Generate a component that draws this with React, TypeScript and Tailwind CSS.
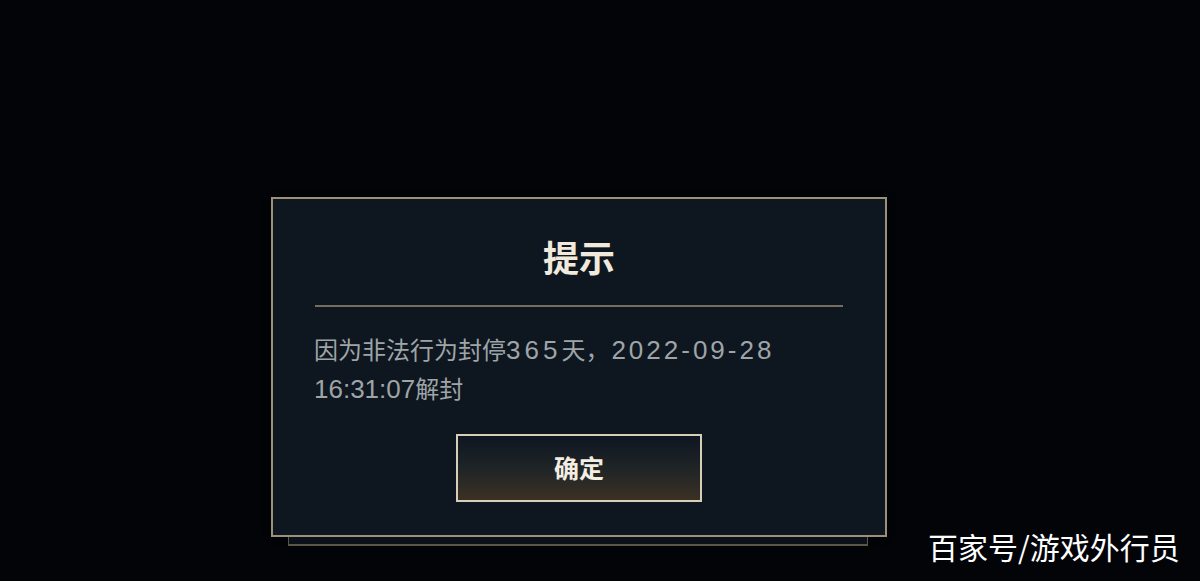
import React from "react";

export default function App() {
  const font = { fontFamily: '"Noto Sans CJK SC", "Noto Sans", sans-serif' };
  const latin = "font-['Liberation_Sans','Noto_Sans_CJK_SC',sans-serif] text-[26px] leading-[39px]";
  return (
    <div
      className="relative h-[581px] w-[1200px] overflow-hidden bg-[#020408]"
      style={font}
    >
      <div className="pl-[271px] pt-[197px]">
        <div className="flex h-[340px] w-[616px] flex-col border-2 border-[#9c9078] bg-[#0e1620] shadow-[0_0_6px_rgba(0,0,0,0.8)]">
          <div className="pt-[33px] text-center text-[36px] font-bold leading-[48px] text-[#efeadc]">
            提示
          </div>
          <div className="mx-[42px] mt-[25px] h-[2px] bg-[#756e5c]" />
          <div className="mt-[22px] px-[41px] text-[24px] leading-[39px] text-[#9fa5a7]">
            <div className="h-[39px] whitespace-nowrap">
              因为非法行为封停<span className={`${latin} tracking-[4px]`}>365</span>天，
              <span className={`${latin} ml-[2px] tracking-[3px]`}>2022-09-28</span>
            </div>
            <div className="h-[39px] whitespace-nowrap">
              <span className={latin}>16:31:07</span>解封
            </div>
          </div>
          <div className="ml-[183px] mt-[27px] flex h-[68px] w-[246px] items-center justify-center border-2 border-[#d6ceb6] bg-gradient-to-b from-[#0f1622] via-[#1f2426] to-[#3b3124] text-[25px] font-bold text-[#f2eee2]">
            确定
          </div>
        </div>
        <div className="ml-[17px] h-[9px] w-[580px] border-x border-b-2 border-[#5c5648] bg-[#0b1118]" />
      </div>
      <div className="absolute left-[928px] top-[528px] text-[30px] leading-[36px] text-white">
        百家号/游戏外行员
      </div>
    </div>
  );
}
